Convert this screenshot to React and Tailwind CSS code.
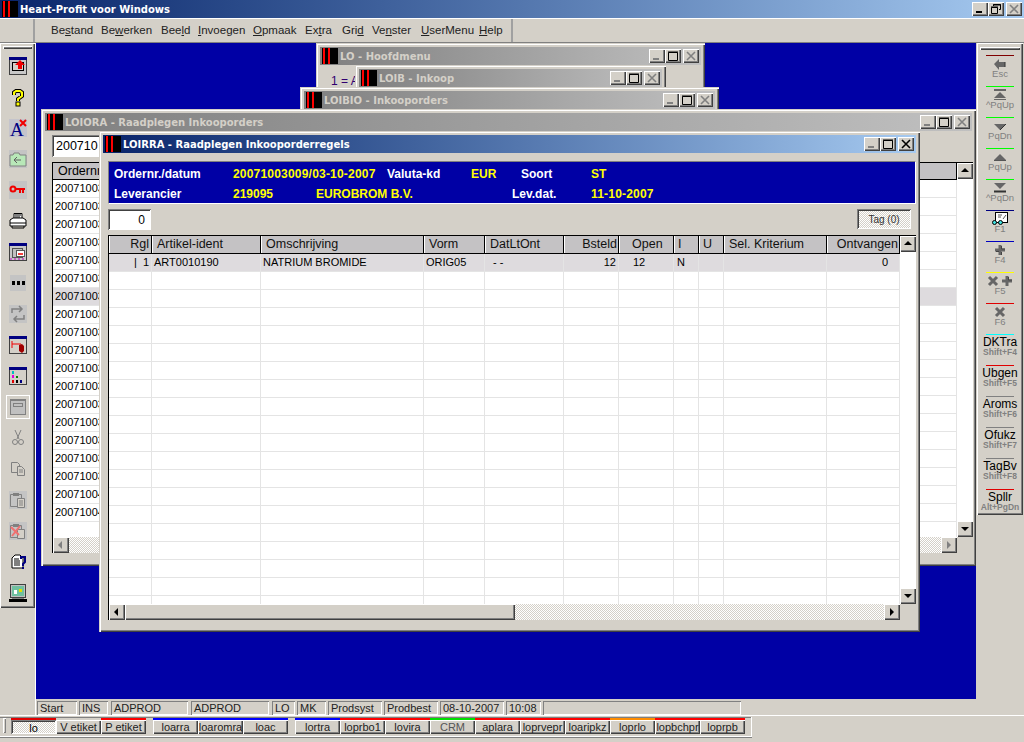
const raised = "shadow-[inset_1px_1px_0_#fff,inset_-1px_-1px_0_#404040,inset_-2px_-2px_0_#808080]";
const frame = "shadow-[inset_1px_1px_0_#d4d0c8,inset_2px_2px_0_#fff,inset_-1px_-1px_0_#404040,inset_-2px_-2px_0_#808080]";
const sunken = "shadow-[inset_1px_1px_0_#808080,inset_-1px_-1px_0_#fff,inset_2px_2px_0_#404040]";
const hatch = "bg-[repeating-conic-gradient(#d4d0c8_0_25%,#fff_0_50%)] bg-[length:2px_2px]";
const titleFont = "font-['DejaVu_Sans',sans-serif] font-bold text-[10px] pt-px";

const menus = [
  ["Be", "s", "tand", "w-[50px]"],
  ["Be", "w", "erken", "w-[60px]"],
  ["Bee", "l", "d", "w-[37px]"],
  ["", "I", "nvoegen", "w-[55px]"],
  ["", "O", "pmaak", "w-[52px]"],
  ["Ex", "t", "ra", "w-[37px]"],
  ["Gri", "d", "", "w-[30px]"],
  ["Ve", "n", "ster", "w-[49px]"],
  ["", "U", "serMenu", "w-[58px]"],
  ["", "H", "elp", "w-[40px]"],
];

const columns = [
  { name: "Rgl", w: "w-[43px]", head: "justify-end pr-[2px]", cell: "justify-end pr-[2px]", text: "| \u00a01" },
  { name: "Artikel-ident", w: "w-[109px]", head: "pl-[5px]", cell: "pl-[2px]", text: "ART0010190" },
  { name: "Omschrijving", w: "w-[163px]", head: "pl-[5px]", cell: "pl-[2px]", text: "NATRIUM BROMIDE" },
  { name: "Vorm", w: "w-[61px]", head: "pl-[5px]", cell: "pl-[2px]", text: "ORIG05" },
  { name: "DatLtOnt", w: "w-[79px]", head: "pl-[5px]", cell: "pl-[8px]", text: "- -" },
  { name: "Bsteld", w: "w-[55px]", head: "justify-end pr-[1px]", cell: "justify-end pr-[2px]", text: "12" },
  { name: "Open", w: "w-[55px]", head: "pl-[13px]", cell: "pl-[14px]", text: "12" },
  { name: "I", w: "w-[25px]", head: "pl-[4px]", cell: "pl-[3px]", text: "N" },
  { name: "U", w: "w-[25px]", head: "pl-[4px]", cell: "", text: "" },
  { name: "Sel. Kriterium", w: "w-[103px]", head: "pl-[5px]", cell: "", text: "" },
  { name: "Ontvangen", w: "w-[73px]", head: "justify-end pr-[1px]", cell: "justify-end pr-[11px]", text: "0" },
];

const status = [
  ["Start", "w-[40px] ml-px shadow-[inset_-1px_-1px_0_#808080,inset_1px_1px_0_#fff]"],
  ["INS", "w-[29px] ml-[2px]"],
  ["ADPROD", "w-[77px] ml-[3px]"],
  ["ADPROD", "w-[78px] ml-[3px]"],
  ["LO", "w-[23px] ml-[3px]"],
  ["MK", "w-[29px] ml-[2px]"],
  ["Prodsyst", "w-[54px] ml-[2px]"],
  ["Prodbest", "w-[54px] ml-[2px]"],
  ["08-10-2007", "w-[64px] ml-[2px]"],
  ["10:08", "w-[35px] ml-[2px]"],
  ["", "w-[198px] ml-[2px]"],
];

const tasks = [
  { label: "lo", line: "bg-[#e00000]", on: true },
  { label: "V etiket", line: "bg-transparent" },
  { label: "P etiket", line: "bg-[#ff0000]" },
  { label: "loarra", line: "bg-[#0000ff]", gap: true },
  { label: "loaromra", line: "bg-[#0000ff]" },
  { label: "loac", line: "bg-[#0000ff]" },
  { label: "lortra", line: "bg-[#0000ff]", gap: true },
  { label: "loprbo1", line: "bg-[#ff0000]" },
  { label: "lovira", line: "bg-[#ff0000]" },
  { label: "CRM", line: "bg-[#00e000]" },
  { label: "aplara", line: "bg-[#ff0000]" },
  { label: "loprvepr", line: "bg-[#ff0000]" },
  { label: "loaripkz", line: "bg-[#ff0000]" },
  { label: "loprlo", line: "bg-[#ff8c00]" },
  { label: "lopbchpr", line: "bg-[#ff0000]" },
  { label: "loprpb", line: "bg-[#ff0000]" },
];

function Svg({ children, w = 18, h = 18 }) {
  return (
    <svg className="overflow-visible" width={w} height={h} viewBox={`0 0 ${w} ${h}`} fill="none">
      {children}
    </svg>
  );
}

const leftIcons = [
  <Svg>
    <rect x="0.5" y="0.5" width="17" height="17" fill="#c8c8c8" stroke="#404040" />
    <rect x="0" y="0" width="18" height="3" fill="#000080" />
    <rect x="3.5" y="5.5" width="11" height="8" fill="#d4d0c8" stroke="#000" />
    <path d="M11 3l5 5h-3v4h-4V8H6z" fill="#f00000" />
  </Svg>,
  <Svg>
    <path d="M5 7V4.5L7 3h4l2 1.500V8l-4 3v2" stroke="#000" strokeWidth="4" />
    <path d="M5 7V4.500L7 3h4l2 1.500V8l-4 3v2" stroke="#ffff00" strokeWidth="2" />
    <rect x="7" y="14" width="4" height="4" fill="#ffff00" stroke="#000" />
  </Svg>,
  <Svg>
    <rect width="18" height="18" fill="#c4c4cc" />
    <text x="1" y="17" fontFamily="'Liberation Serif',serif" fontSize="19" fill="#000080">A</text>
    <path d="M11 1l6 6M17 1l-6 6" stroke="#f00000" strokeWidth="2" />
  </Svg>,
  <Svg>
    <rect width="18" height="18" fill="#c4c4c4" />
    <path d="M1 5h3l1-2h5l1 2h6v11H1z" fill="#b8e8b8" stroke="#808080" />
    <path d="M5 10h7M8 7l-3 3 3 3" stroke="#606060" />
  </Svg>,
  <Svg>
    <rect width="18" height="18" fill="#c4c4c4" />
    <circle cx="4" cy="8" r="2.500" stroke="#f00000" strokeWidth="2" />
    <path d="M6 7h10v2h-1v3h-2V9h-1v3h-2V9H6z" fill="#f00000" />
  </Svg>,
  <Svg>
    <path d="M5 1.500h8v5H5z" fill="#fff" stroke="#000" />
    <path d="M1 8l3-2h10l3 2v6H1z" fill="#fff" stroke="#000" />
    <path d="M1 11h16M3 14v2h12v-2" stroke="#000" />
    <path d="M6 3h6M6 5h5" stroke="#000" />
  </Svg>,
  <Svg>
    <rect x="0.5" y="0.5" width="17" height="17" fill="#c8c8c8" stroke="#404040" />
    <rect width="18" height="3" fill="#000080" />
    <rect x="3.500" y="5.500" width="10" height="9" fill="#c0c0c0" stroke="#555" />
    <rect x="7.500" y="7.500" width="8" height="6" fill="#fff" stroke="#555" />
    <path d="M9 11h5" stroke="#f00000" strokeWidth="1.500" />
    <path d="M1 16h16" stroke="#c000c0" strokeDasharray="2 2" />
  </Svg>,
  <Svg w={16} h={16}>
    <rect width="16" height="16" fill="#c4c4c4" />
    <path d="M2 6h3v4H2zM7 6h3v4H7zM12 6h3v4h-3z" fill="#000" />
  </Svg>,
  <Svg>
    <rect width="18" height="18" fill="#c4c4c4" />
    <path d="M3 8V4h9M10 1l3 3-3 3M15 10v4H6M8 11l-3 3 3 3" stroke="#808080" strokeWidth="1.500" />
  </Svg>,
  <Svg>
    <rect x="0.5" y="0.500" width="17" height="17" fill="#d4d0c8" stroke="#404040" />
    <rect width="18" height="3" fill="#000080" />
    <path d="M3 8h9" stroke="#f00000" />
    <path d="M3 5v7" stroke="#f00000" />
    <path d="M10 9l3-1 2 2v5l-2 2-3-2z" fill="#a00000" />
  </Svg>,
  <Svg>
    <rect x="0.5" y="0.5" width="17" height="17" fill="#d4d0c8" stroke="#404040" />
    <rect width="18" height="3" fill="#000080" />
    <path d="M3 4h2v3H3z" fill="#00c0c0" />
    <path d="M3 8h2v3H3z" fill="#e000e0" />
    <path d="M7 9h2v2H7z" fill="#008000" />
    <path d="M3 13h2v3H3z" fill="#e00000" />
    <path d="M7 13h2v3H7z" fill="#000" />
    <path d="M11 13h2v3h-2z" fill="#000080" />
  </Svg>,
  <Svg>
    <rect x="1.500" y="1.500" width="15" height="15" fill="#c0c0c0" stroke="#808080" />
    <rect x="1" y="1" width="16" height="2" fill="#808080" />
    <rect x="4.500" y="5.500" width="9" height="3" stroke="#808080" />
  </Svg>,
  <Svg>
    <path d="M6 1l4 9M12 1L8 10" stroke="#808080" />
    <circle cx="6" cy="13" r="2.500" stroke="#808080" />
    <circle cx="12" cy="13" r="2.500" stroke="#808080" />
  </Svg>,
  <Svg>
    <path d="M2.500 2.500h6l2 2v8h-8z" fill="#d4d0c8" stroke="#808080" />
    <path d="M8.500 6.500h4l3 3v6h-7z" fill="#d4d0c8" stroke="#808080" />
    <path d="M10 10h4M10 12h4" stroke="#808080" />
  </Svg>,
  <Svg>
    <rect width="18" height="18" fill="#c4c4c4" />
    <path d="M1.500 3.500h11v12h-11z" stroke="#808080" />
    <path d="M4 2h6v3H4z" fill="#808080" />
    <path d="M8.500 7.500h7v9h-7z" fill="#d4d0c8" stroke="#808080" />
    <path d="M10 10h4M10 12h4M10 14h4" stroke="#808080" />
  </Svg>,
  <Svg>
    <rect width="18" height="18" fill="#c4c4c4" />
    <path d="M1.500 3.500h11v12h-11z" stroke="#808080" />
    <path d="M4 2h6v3H4z" fill="#808080" />
    <path d="M8.500 7.500h7v9h-7z" fill="#d4d0c8" stroke="#808080" />
    <path d="M2 5l8 8M11 4l-8 10" stroke="#f07070" strokeWidth="2" />
  </Svg>,
  <Svg w={16} h={16}>
    <path d="M2 4l3-3h5l3 3v10H2z" fill="#fff" stroke="#000" />
    <path d="M4 7h6M4 9h6M4 11h6M4 5h5" stroke="#000" />
    <path d="M11 5V3h4v5l-2 2v2" stroke="#000080" strokeWidth="2" />
    <rect x="12" y="13" width="2" height="2" fill="#000080" />
  </Svg>,
  <Svg>
    <rect x="1.500" y="0.500" width="15" height="13" fill="#c0c0c0" stroke="#404040" />
    <rect x="3" y="2" width="12" height="10" fill="#70c0a0" />
    <path d="M5 6h3v4H5z" fill="#fff" />
    <path d="M10 5h3v3h-3z" fill="#e0e000" />
    <rect x="0" y="15" width="18" height="3" fill="#000" />
    <rect x="3" y="14" width="12" height="1" fill="#808080" />
  </Svg>,
];

const gray = "#666";
const rightIcons = {
  esc: (
    <Svg w={14} h={12}>
      <path d="M1 6l5-5v3h6v5H6v3z" fill={gray} />
      <path d="M12 4v5" stroke="#333" />
    </Svg>
  ),
  topUp: (
    <Svg w={14} h={12}>
      <path d="M1 1h12" stroke={gray} strokeWidth="2" />
      <path d="M7 3l6 6H1z" fill={gray} />
      <path d="M1 10.500h12" stroke={gray} />
    </Svg>
  ),
  down: (
    <Svg w={14} h={12}>
      <path d="M1 4h12L7 10z" fill={gray} />
      <path d="M7 10l6-6" stroke="#333" />
    </Svg>
  ),
  up: (
    <Svg w={14} h={12}>
      <path d="M7 3l6 6H1z" fill={gray} />
      <path d="M1 9.500h12" stroke="#555" />
    </Svg>
  ),
  botDown: (
    <Svg w={14} h={12}>
      <path d="M1 1h12L7 7z" fill={gray} />
      <path d="M1 9.500h12" stroke="#333" strokeWidth="2" />
    </Svg>
  ),
  find: (
    <Svg w={16} h={13}>
      <rect x="3.500" y="0.500" width="12" height="10" fill="#fff" stroke="#000" />
      <path d="M6 3h4M6 5h3M11 7l3-4" stroke="#555" />
      <circle cx="2.500" cy="10.500" r="2" fill="#40e0e0" stroke="#000" />
      <circle cx="8.500" cy="10.500" r="2" fill="#40e0e0" stroke="#000" />
    </Svg>
  ),
  plus: (
    <Svg w={12} h={12}>
      <path d="M6 1v10M1 6h10" stroke={gray} strokeWidth="3" />
      <path d="M7.500 2v3h3.500M7.500 8v3M2 7.500h3" stroke="#444" />
    </Svg>
  ),
  xplus: (
    <Svg w={26} h={12}>
      <path d="M2 2l8 8M10 2l-8 8" stroke={gray} strokeWidth="3" />
      <path d="M20 1v10M15 6h10" stroke={gray} strokeWidth="3" />
      <path d="M21.500 2v3h3.500" stroke="#444" />
    </Svg>
  ),
  x: (
    <Svg w={12} h={12}>
      <path d="M2 2l8 8M10 2l-8 8" stroke={gray} strokeWidth="3" />
    </Svg>
  ),
};

const rightItems = [
  { line: "bg-[#800000]", icon: "esc", sub: "Esc" },
  { line: "bg-[#00ff00]", icon: "topUp", sub: "^PqUp" },
  { line: "bg-[#00ff00]", icon: "down", sub: "PqDn" },
  { line: "bg-[#00ff00]", icon: "up", sub: "PqUp" },
  { line: "bg-[#00ff00]", icon: "botDown", sub: "^PqDn" },
  { line: "bg-[#000080]", icon: "find", sub: "F1" },
  { line: "bg-[#0000c0]", icon: "plus", sub: "F4" },
  { line: "bg-[#ffff00]", icon: "xplus", sub: "F5" },
  { line: "bg-[#e00000]", icon: "x", sub: "F6" },
  { line: "bg-[#00ffff]", text: "DKTra", sub: "Shift+F4" },
  { line: "bg-[#e00000]", text: "Ubgen", sub: "Shift+F5" },
  { line: "bg-[#808080]", text: "Aroms", sub: "Shift+F6" },
  { line: "bg-[#808080]", text: "Ofukz", sub: "Shift+F7" },
  { line: "bg-[#808080]", text: "TagBv", sub: "Shift+F8" },
  { line: "bg-[#e00000]", text: "Spllr", sub: "Alt+PgDn" },
];

function TitleButton({ kind, dim, restore, className = "" }) {
  const c = dim ? "#808080" : "#000";
  return (
    <div className={`w-[16px] h-[14px] bg-[#d4d0c8] flex items-center justify-center ${raised} ${className}`}>
      <svg width="10" height="10" viewBox="0 0 10 10" fill="none">
        {kind === "min" && <path d="M1 8h6" stroke={c} strokeWidth="2" />}
        {kind === "max" && !restore && <path d="M0.500 1.500h9v8h-9zM0 1h10" stroke={c} />}
        {kind === "max" && restore && <path d="M2.500 2V0.500h7v5H8M0.500 3.500h6v6h-6zM0 3h7M2 1h8" stroke={c} />}
        {kind === "close" && <path d="M1 1l8 8M9 1l-8 8" stroke={c} strokeWidth="1.600" />}
      </svg>
    </div>
  );
}

function AppLogo() {
  return (
    <div className="w-[16px] h-[16px] bg-black flex gap-[3px] pl-[1px] shrink-0">
      <div className="w-[2px] h-full bg-[#ff0000]" />
      <div className="w-[2px] h-full bg-[#ff0000]" />
    </div>
  );
}

function Window({ title, active, className, children }) {
  return (
    <div className={`absolute bg-[#d4d0c8] p-[4px] overflow-hidden ${frame} ${className}`}>
      <div className={`h-[18px] flex items-center pl-[2px] pr-[2px] bg-gradient-to-r ${active ? "from-[#0a246a] to-[#a6caf0]" : "from-[#808080] to-[#c0c0c0]"}`}>
        <AppLogo />
        <span className={`ml-[2px] ${titleFont} ${active ? "text-white" : "text-[#d4d0c8]"}`}>{title}</span>
        <div className="ml-auto flex">
          <TitleButton kind="min" dim />
          <TitleButton kind="max" />
          <TitleButton kind="close" dim={!active} className="ml-[2px]" />
        </div>
      </div>
      {children}
    </div>
  );
}

function ScrollButton({ dir, dim }) {
  const c = dim ? "#808080" : "#000";
  const pts = { up: "5,2 9,6 1,6", down: "1,3 9,3 5,7", left: "6,1 6,9 2,5", right: "3,1 3,9 7,5" }[dir];
  return (
    <div className={`w-[16px] h-[16px] shrink-0 bg-[#d4d0c8] flex items-center justify-center ${raised}`}>
      <svg width="10" height="10" viewBox="0 0 10 10">
        <polygon points={pts} fill={c} />
      </svg>
    </div>
  );
}

function VScroll() {
  return (
    <div className="w-[16px] flex flex-col bg-white shrink-0">
      <ScrollButton dir="up" />
      <div className="flex-1" />
      <ScrollButton dir="down" />
    </div>
  );
}

function FrontGrid() {
  return (
    <div className="mt-[5px] ml-[5px] w-[808px] h-[385px] flex flex-col border-l border-t border-black">
      <div className="flex flex-1 min-h-0">
        <div className="w-[791px] bg-white overflow-hidden">
          <div className="flex h-[18px] text-[12.500px] text-[#111]">
            {columns.map((col) => (
              <div key={col.name} className={`${col.w} ${col.head} flex items-center bg-[#c4c2c4] border-r border-b border-black shadow-[inset_1px_0_0_#fff] whitespace-nowrap overflow-hidden`}>
                {col.name}
              </div>
            ))}
          </div>
          {Array.from({ length: 20 }).map((_, r) => (
            <div key={r} className={`flex h-[18px] text-[11px] text-black ${r === 0 ? "bg-[#dedbde]" : ""}`}>
              {columns.map((col) => (
                <div key={col.name} className={`${col.w} ${col.cell} flex items-center border-r border-b border-[#e4e4e4] whitespace-pre`}>
                  {r === 0 ? col.text : ""}
                </div>
              ))}
            </div>
          ))}
        </div>
        <VScroll />
      </div>
      <div className="flex h-[16px] shrink-0">
        <ScrollButton dir="left" />
        <div className={`w-[390px] bg-[#d4d0c8] ${raised}`} />
        <div className={`flex-1 ${hatch}`} />
        <ScrollButton dir="right" />
        <div className="w-[16px] bg-[#d4d0c8]" />
      </div>
    </div>
  );
}

function BackGrid() {
  const rows = Array.from({ length: 20 });
  return (
    <div className="mt-[5px] ml-[7px] w-[921px] h-[391px] flex flex-col border-l border-t border-black">
      <div className="flex flex-1 min-h-0">
        <div className="flex-1 bg-white overflow-hidden">
          <div className="h-[17px] flex items-center pl-[5px] bg-[#c4c2c4] border-r border-b border-black text-[12.500px]">Ordernr.</div>
          {rows.map((_, r) => (
            <div key={r} className={`h-[18px] flex items-center pl-[2px] text-[11px] border-r border-b border-[#e4e4e4] ${r === 6 ? "bg-[#dedbde]" : ""}`}>
              {r < 17 ? "20071003" : r < 19 ? "20071004" : ""}
            </div>
          ))}
        </div>
        <VScroll />
      </div>
      <div className="flex h-[16px] shrink-0">
        <ScrollButton dir="left" dim />
        <div className={`flex-1 ${hatch}`} />
        <ScrollButton dir="right" dim />
        <div className="w-[16px] bg-[#d4d0c8]" />
      </div>
    </div>
  );
}

export default function App() {
  return (
    <div className="w-[1024px] h-[742px] overflow-hidden bg-[#d4d0c8] flex flex-col font-['Liberation_Sans',Arial,sans-serif] text-black">
      <div className="h-[18px] flex items-center pl-[2px] pr-[2px] bg-gradient-to-r from-[#0a246a] to-[#a6caf0]">
        <AppLogo />
        <span className={`ml-[2px] text-white ${titleFont}`}>Heart-Profit voor Windows</span>
        <div className="ml-auto flex">
          <TitleButton kind="min" />
          <TitleButton kind="max" restore />
          <TitleButton kind="close" dim className="ml-[2px]" />
        </div>
      </div>

      <div className="h-[25px] flex border-t border-b border-t-white border-b-[#808080] bg-[#d4d0c8]">
        <div className="w-[35px] border-r-2 border-r-[#a0a0a0]" />
        <div className="w-[478px] flex items-center border-r-2 border-r-[#a0a0a0] pl-[4px]">
          <div className="w-[3px] h-[16px] bg-[#d4d0c8] shadow-[inset_1px_1px_0_#fff,inset_-1px_-1px_0_#808080]" />
          <div className="ml-[9px] flex text-[11.500px] text-[#222] pl-[3px]">
            {menus.map((m) => (
              <div key={m[1] + m[2]} className={m[3]}>
                {m[0]}
                <span className="underline">{m[1]}</span>
                {m[2]}
              </div>
            ))}
          </div>
        </div>
      </div>

      <div className="flex-1 flex min-h-0">
        <div className="w-[36px] shrink-0 border-r border-r-white">
          <div className={`w-[35px] h-[565px] pt-[3px] bg-[#d4d0c8] ${raised}`}>
            <div className={`mx-[3px] h-[3px] ${raised}`} />
            <div className="mt-[1px] flex flex-col items-center">
              {leftIcons.map((icon, i) => (
                <div key={i} className="w-[24px] h-[31px] flex items-center justify-center">
                  <div className={`w-[24px] h-[24px] flex items-center justify-center ${i === 11 ? "shadow-[inset_0_0_0_1px_#fff]" : ""}`}>
                    {icon}
                  </div>
                </div>
              ))}
            </div>
          </div>
        </div>

        <div className="flex-1 flex flex-col min-w-0">
          <div className="relative h-[656px] bg-[#0000a5] overflow-hidden">
            <Window title="LO - Hoofdmenu" className="left-[280px] top-0 w-[389px] h-[70px]">
              <div className="mt-[7px] ml-[11px] text-[12px] text-[#300070]">1 = A</div>
            </Window>
            <Window title="LOIB - Inkoop" className="left-[319px] top-[22px] w-[311px] h-[60px]" />
            <Window title="LOIBIO - Inkooporders" className="left-[264px] top-[44px] w-[419px] h-[60px]" />
            <Window title="LOIORA - Raadplegen Inkooporders" className="left-[5px] top-[66px] w-[935px] h-[457px]">
              <div className={`mt-[4px] ml-[7px] w-[200px] h-[22px] bg-white flex items-center pl-[4px] text-[12.500px] ${sunken}`}>200710</div>
              <BackGrid />
            </Window>
            <Window title="LOIRRA - Raadplegen Inkooporderregels" active className="left-[63px] top-[88px] w-[821px] h-[501px]">
              <div className="mt-[8px] ml-[5px] w-[808px] h-[43px] bg-[#0000a5] border border-t-[#808080] border-l-[#808080] border-r-white border-b-white pl-[5px] pt-[2px] font-bold text-[12px]">
                <div className="flex h-[20px] items-center">
                  <span className="w-[119px] text-white">Ordernr./datum</span>
                  <span className="w-[154px] text-[#ffff00] tracking-[0.2px]">20071003009/03-10-2007</span>
                  <span className="w-[84px] text-white">Valuta-kd</span>
                  <span className="w-[50px] text-[#ffff00]">EUR</span>
                  <span className="w-[70px] text-white">Soort</span>
                  <span className="text-[#ffff00]">ST</span>
                </div>
                <div className="flex h-[20px] items-center">
                  <span className="w-[119px] text-white">Leverancier</span>
                  <span className="w-[83px] text-[#ffff00]">219095</span>
                  <span className="w-[196px] text-[#ffff00]">EUROBROM B.V.</span>
                  <span className="w-[79px] text-white">Lev.dat.</span>
                  <span className="text-[#ffff00] tracking-[0.2px]">11-10-2007</span>
                </div>
              </div>
              <div className="mt-[5px] ml-[5px] flex w-[803px] justify-between">
                <div className={`w-[43px] h-[21px] bg-white flex items-center justify-end pr-[6px] text-[12px] ${sunken}`}>0</div>
                <div className={`w-[54px] h-[20px] flex items-center justify-center text-[10px] text-[#333] ${hatch} ${sunken}`}>Tag (0)</div>
              </div>
              <FrontGrid />
            </Window>
          </div>
          <div className="h-[16px] flex items-end text-[11px] text-[#222]">
            {status.map((s, i) => (
              <div key={i} className={`h-[14px] flex items-center pl-[3px] whitespace-nowrap shadow-[inset_1px_1px_0_#808080,inset_-1px_-1px_0_#fff] ${s[1]}`}>
                {s[0]}
              </div>
            ))}
          </div>
        </div>

        <div className="w-[48px] shrink-0 pl-px">
          <div className={`w-[46px] h-[472px] pt-[4px] bg-[#d4d0c8] ${raised}`}>
            <div className={`mx-[3px] h-[3px] ${raised}`} />
            <div className="mt-[5px] flex flex-col items-center">
              {rightItems.map((item) => (
                <div key={item.sub} className="w-[28px] h-[31px] flex flex-col items-center">
                  <div className={`w-[28px] h-px shrink-0 ${item.line}`} />
                  {item.icon ? (
                    <div className="h-[11px] mt-[2px] flex items-center justify-center">{rightIcons[item.icon]}</div>
                  ) : (
                    <div className="h-[11px] leading-[11px] text-[12px] mt-[2px]">{item.text}</div>
                  )}
                  <div className={`whitespace-nowrap text-[#808080] ${item.icon ? "leading-[9px] text-[9.500px]" : "leading-[8px] text-[8.500px] font-bold"}`}>{item.sub}</div>
                </div>
              ))}
            </div>
          </div>
        </div>
      </div>

      <div className="h-[27px] border-t border-white pt-[1px]">
        <div className="w-[752px] h-[21px] flex items-start pl-[3px] pt-[1px] shadow-[inset_-1px_-1px_0_#fff,inset_0_1px_0_#808080] border-b border-[#808080]">
          <div className="w-[3px] h-[15px] mr-[5px] shadow-[inset_1px_1px_0_#fff,inset_-1px_-1px_0_#808080]" />
          {tasks.map((t) => (
            <div key={t.label} className={`w-[45px] flex flex-col ${t.gap ? "ml-[7px]" : ""}`}>
              <div className={`h-[2px] ${t.line}`} />
              <div className={`h-[14px] flex items-center justify-center text-[11px] whitespace-nowrap overflow-hidden ${t.on ? `${hatch} ${sunken} pt-[2px]` : `bg-[#d4d0c8] ${raised} text-[#222]`} ${t.label === "CRM" ? "text-[#555]" : ""}`}>
                {t.label}
              </div>
            </div>
          ))}
        </div>
      </div>
    </div>
  );
}
